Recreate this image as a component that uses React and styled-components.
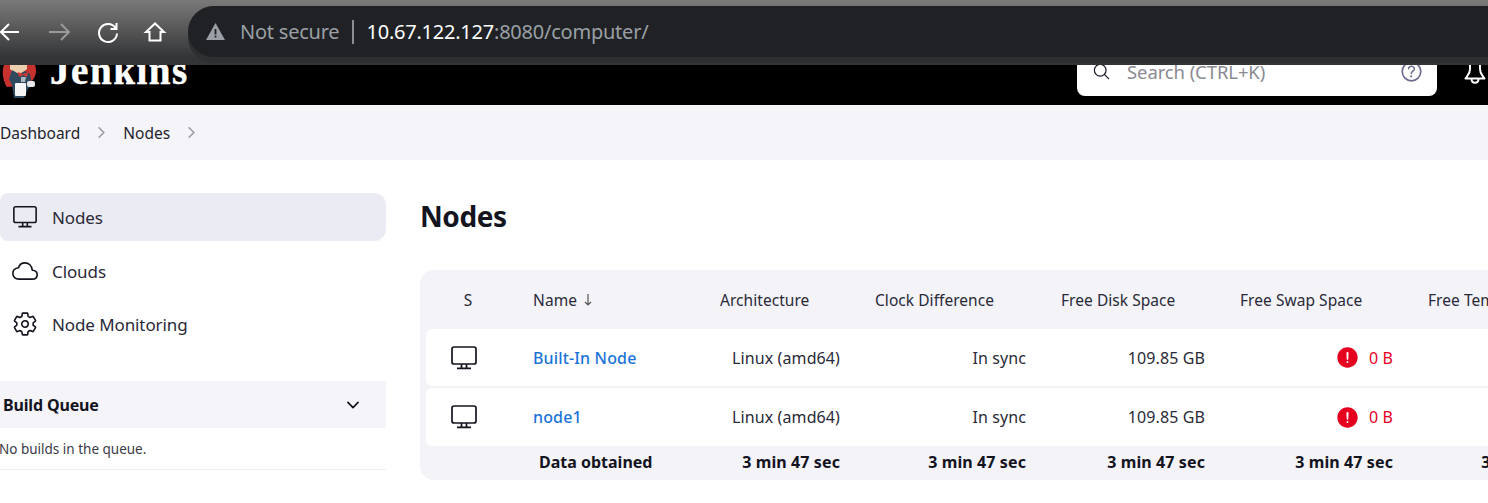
import React from "react";
import styled, { createGlobalStyle } from "styled-components";
import {
  IoCloudOutline, IoSettingsOutline, IoChevronDown, IoChevronForward,
  IoAlertCircle, IoSearchOutline, IoHelpCircleOutline,
} from "react-icons/io5";

const Global = createGlobalStyle`
  html, body { margin: 0; padding: 0; background: #fff; overflow: hidden; }
  body { width: 1488px; height: 503px; font-family: "Noto Sans", "Open Sans", sans-serif; color: #14141f; }
  a { text-decoration: none; }
`;

const Page = styled.div`width: 1488px; height: 503px; overflow: hidden; display: flex; flex-direction: column;`;

const BrowserBar = styled.div`
  height: 65px; flex: none; display: flex; box-sizing: border-box; padding-top: 6px;
  background: linear-gradient(#7a7a7a 0, #6c6c6c 12px, #333436 58px, #333436 100%);
`;
const NavButtons = styled.div`width: 188px; flex: none; display: flex; align-items: center; height: 51px;`;
const NavIcon = styled.svg`
  width: 24px; height: 24px; flex: none; margin-left: ${p => p.$ml}px;
  fill: none; stroke: ${p => p.$dim ? "#9a9a9a" : "#fff"}; stroke-width: 2;
`;
const UrlPill = styled.div`
  flex: 1; height: 51px; background: #202124; border-radius: 26px 0 0 26px;
  display: flex; align-items: center; padding-left: 18px; font-size: 20px;
  letter-spacing: -0.23px; box-shadow: 0 6px 0 #2e2f31;
`;
const NotSecure = styled.span`color: #9aa0a6; margin-left: 15px; width: 112px; white-space: nowrap;`;
const Divider = styled.span`width: 1.5px; height: 24px; background: #8a8d91; margin-right: 13px;`;
const Host = styled.span`color: #fff;`;
const UrlRest = styled.span`color: #9aa0a6;`;

const Header = styled.header`
  height: 40px; flex: none; background: #000; overflow: hidden;
  display: flex; align-items: flex-end;
`;
const Brand = styled.div`display: flex; align-items: flex-end; width: 1077px; flex: none;`;
const Logo = styled.svg`width: 40px; height: 45px; flex: none;`;
const BrandName = styled.span`
  margin: 0 0 12px 10px; font-family: "Liberation Serif", serif; font-weight: 700;
  font-size: 39px; line-height: 44px; color: #fff; letter-spacing: 1.55px;
  -webkit-text-stroke: 0.5px #fff;
`;
const Search = styled.div`
  width: 360px; height: 50px; margin-bottom: 9px; flex: none; background: #fff; border-radius: 8px;
  display: flex; align-items: center; box-sizing: border-box; padding: 0 12px 0 15px; color: #14141f;
`;
const SearchText = styled.span`flex: 1; margin-left: 16px; font-size: 18.5px; color: #8a8a92; letter-spacing: -0.1px;`;
const BellIcon = styled.svg`
  width: 22px; height: 30px; margin: 0 0 16px 27px; flex: none;
  fill: none; stroke: #fff; stroke-width: 2; stroke-linejoin: round;
`;

const Crumbs = styled.nav`
  height: 55px; flex: none; background: #f4f4f9; display: flex; align-items: center; font-size: 15.5px;
  color: #14141f;
`;
const Crumb = styled.a`color: #1f1f2b; white-space: nowrap;`;
const CrumbSep = styled.span`
  display: inline-flex; color: #9b9ba3; font-size: 17px; margin: 0 13px;
`;

const Body = styled.div`flex: 1; display: flex; min-height: 0;`;
const Sidebar = styled.aside`width: 386px; flex: none; padding-top: 33px;`;
const SideItem = styled.a`
  height: 48px; display: flex; align-items: center; padding-left: 12px; margin-bottom: ${p => p.$mb}px;
  border-radius: 8px 12px 12px 8px;
  background: ${p => p.$active ? "#ebebf3" : "transparent"}; color: #2a2a38; font-size: 17px;
  letter-spacing: -0.1px;
  svg { font-size: 26px; margin-right: 14px; color: #14141f; flex: none; }
`;
const QueueHeader = styled.div`
  margin-top: 33px; height: 47px; background: #f4f4f9; display: flex; align-items: center;
  justify-content: space-between; padding: 0 24px 0 3px; font-weight: 700; font-size: 16px;
  letter-spacing: -0.15px; svg { font-size: 18px; }
`;
const QueueEmpty = styled.div`
  height: 41px; margin-left: -1px; display: flex; align-items: center; font-size: 13.5px; color: #3a3a46;
  border-bottom: 1px solid #efeff3;
`;

const Main = styled.main`flex: 1; min-width: 0; padding-left: 34px; overflow: hidden;`;
const Title = styled.h1`
  margin: 0; padding-top: 34px; height: 76px; font-size: 28px; line-height: 44px; font-weight: 700;
  letter-spacing: -0.4px; color: #14141f;
`;
const Card = styled.div`
  width: 1250px; background: #f3f3f8; border-radius: 14px 0 0 14px; padding-left: 6px; height: 210px;
`;
const Row = styled.div`
  display: grid; grid-template-columns: 82px 200px 155px 186px 179px 188px 186px;
  height: ${p => p.$h}px; box-sizing: border-box; padding-bottom: ${p => p.$pb || 0}px;
  align-items: center; background: ${p => p.$white ? "#fff" : "transparent"};
  border-radius: ${p => p.$white ? "6px 0 0 6px" : "0"}; margin-bottom: ${p => p.$mb || 0}px;
  font-size: 16px; letter-spacing: 0.1px;
  font-weight: ${p => p.$bold ? 700 : 400}; color: ${p => p.$bold ? "#14141f" : "#2a2a38"};
`;
const HeadCell = styled.div`padding-left: 12px; white-space: nowrap; font-size: 15.5px; letter-spacing: 0.05px;`;
const StatusHead = styled.div`text-align: center; font-size: 15.5px; padding-left: 2px;`;
const NameHead = styled.div`padding-left: 25px; font-size: 15.5px; display: flex; align-items: center;`;
const SortArrow = styled.svg`width: 10px; height: 12px; margin-left: 6px; fill: none; stroke: #555; stroke-width: 1.2;`;
const MonitorIcon = styled.svg`
  width: ${p => p.$size || 28}px; height: ${p => p.$size || 28}px; flex: none;
  fill: none; stroke: #14141f; stroke-width: 1.7; stroke-linejoin: round;
`;
const StatusCell = styled.div`display: flex; justify-content: center; padding-right: 7px;`;
const NameCell = styled.div`padding-left: 25px; white-space: nowrap;`;
const NodeLink = styled.a`color: #1a73d9; font-weight: 500; letter-spacing: 0.15px;`;
const NumCell = styled.div`
  padding-right: 23px; white-space: nowrap; display: flex; justify-content: flex-end;
  align-items: center; color: ${p => p.$danger ? "#e6001f" : "inherit"};
  svg { font-size: 25px; margin-right: 9px; }
`;
const FootLabel = styled.div`padding-left: 31px; white-space: nowrap; letter-spacing: 0;`;

const JenkinsLogo = () => (
  <Logo viewBox="0 60 40 45">
    <path d="M4 65h31c2 6 1 11-3 16l-4 4-21 2C4 83 1 73 4 65z" fill="#c8322e" />
    <path d="M10 65h17v4l-5 4h-8l-4-4z" fill="#eccfae" />
    <path d="M12 70l7 4 6-3 5 3 2 11-4 4-4 9H14L12 85l-3-6z" fill="#2f4a5e" />
    <path d="M18 72l5 2 5-2-1 5-4-2-4 2z" fill="#d33833" />
    <path d="M21 77h5l-1 5h-4z" fill="#aeb9c2" />
    <rect x="15" y="83" width="11" height="13" rx="1" fill="#f5f5f5" />
    <rect x="27" y="81" width="8" height="6" rx="2" fill="#e8e8e8" />
  </Logo>
);

const Monitor = ({ size }) => (
  <MonitorIcon $size={size} viewBox="0 0 28 28">
    <rect x="2" y="3" width="24" height="17" rx="2" />
    <path d="M11.5 20v3.6M16.5 20v3.6M7 24.4h14" />
  </MonitorIcon>
);

const rows = [{ name: "Built-In Node", h: 57, mb: 2 }, { name: "node1", h: 58, mb: 0 }];

export default function App() {
  return (
    <Page>
      <Global />
      <BrowserBar>
        <NavButtons>
          <NavIcon $ml={-2} viewBox="0 0 24 24"><path d="M21 12H3M11 4l-8 8 8 8" /></NavIcon>
          <NavIcon $ml={25} $dim viewBox="0 0 24 24"><path d="M2 12h20M14 4l8 8-8 8" /></NavIcon>
          <NavIcon $ml={25} viewBox="0 0 24 24"><path d="M19.5 8A9 9 0 1 0 21 13.5M20.5 3v6h-6" /></NavIcon>
          <NavIcon $ml={23} viewBox="0 0 24 24"><path d="M12 3.5 3 12h3.5v8.5h11V12H21z" /></NavIcon>
        </NavButtons>
        <UrlPill>
          <svg width="19" height="17" viewBox="0 0 19 17"><path d="M9.5 0 19 17H0z" fill="#9aa0a6" /><rect x="8.6" y="6" width="1.8" height="5.5" fill="#202124" /><rect x="8.6" y="12.7" width="1.8" height="1.8" fill="#202124" /></svg>
          <NotSecure>Not secure</NotSecure>
          <Divider />
          <Host>10.67.122.127</Host><UrlRest>:8080/computer/</UrlRest>
        </UrlPill>
      </BrowserBar>
      <Header>
        <Brand>
          <JenkinsLogo />
          <BrandName>Jenkins</BrandName>
        </Brand>
        <Search>
          <IoSearchOutline size={19} />
          <SearchText>Search (CTRL+K)</SearchText>
          <IoHelpCircleOutline size={27} color="#6d6b8f" />
        </Search>
        <BellIcon viewBox="0 0 22 30">
          <path d="M6 2v8c0 5-2 6-4.5 9.500h19C18 16 16 15 16 10V2M7.500 20c0 5 7 5 7 0" />
        </BellIcon>
      </Header>
      <Crumbs>
        <Crumb>Dashboard</Crumb>
        <CrumbSep><IoChevronForward /></CrumbSep>
        <Crumb>Nodes</Crumb>
        <CrumbSep><IoChevronForward /></CrumbSep>
      </Crumbs>
      <Body>
        <Sidebar>
          <SideItem $active $mb={6}><Monitor size={26} />Nodes</SideItem>
          <SideItem $mb={5}><IoCloudOutline />Clouds</SideItem>
          <SideItem $mb={0}><IoSettingsOutline />Node Monitoring</SideItem>
          <QueueHeader>Build Queue<IoChevronDown /></QueueHeader>
          <QueueEmpty>No builds in the queue.</QueueEmpty>
        </Sidebar>
        <Main>
          <Title>Nodes</Title>
          <Card>
            <Row $h={59}>
              <StatusHead>S</StatusHead>
              <NameHead>Name<SortArrow viewBox="0 0 10 12"><path d="M5 0v11M2 8l3 3 3-3" /></SortArrow></NameHead>
              <HeadCell>Architecture</HeadCell>
              <HeadCell>Clock Difference</HeadCell>
              <HeadCell>Free Disk Space</HeadCell>
              <HeadCell>Free Swap Space</HeadCell>
              <HeadCell>Free Temp Space</HeadCell>
            </Row>
            {rows.map(r => (
              <Row key={r.name} $h={r.h} $mb={r.mb} $white>
                <StatusCell><Monitor /></StatusCell>
                <NameCell><NodeLink>{r.name}</NodeLink></NameCell>
                <NumCell>Linux (amd64)</NumCell>
                <NumCell>In sync</NumCell>
                <NumCell>109.85 GB</NumCell>
                <NumCell $danger><IoAlertCircle />0 B</NumCell>
                <NumCell>109.85 GB</NumCell>
              </Row>
            ))}
            <Row $h={34} $pb={2} $bold>
              <div />
              <FootLabel>Data obtained</FootLabel>
              <NumCell>3 min 47 sec</NumCell>
              <NumCell>3 min 47 sec</NumCell>
              <NumCell>3 min 47 sec</NumCell>
              <NumCell>3 min 47 sec</NumCell>
              <NumCell>3 min 47 sec</NumCell>
            </Row>
          </Card>
        </Main>
      </Body>
    </Page>
  );
}
